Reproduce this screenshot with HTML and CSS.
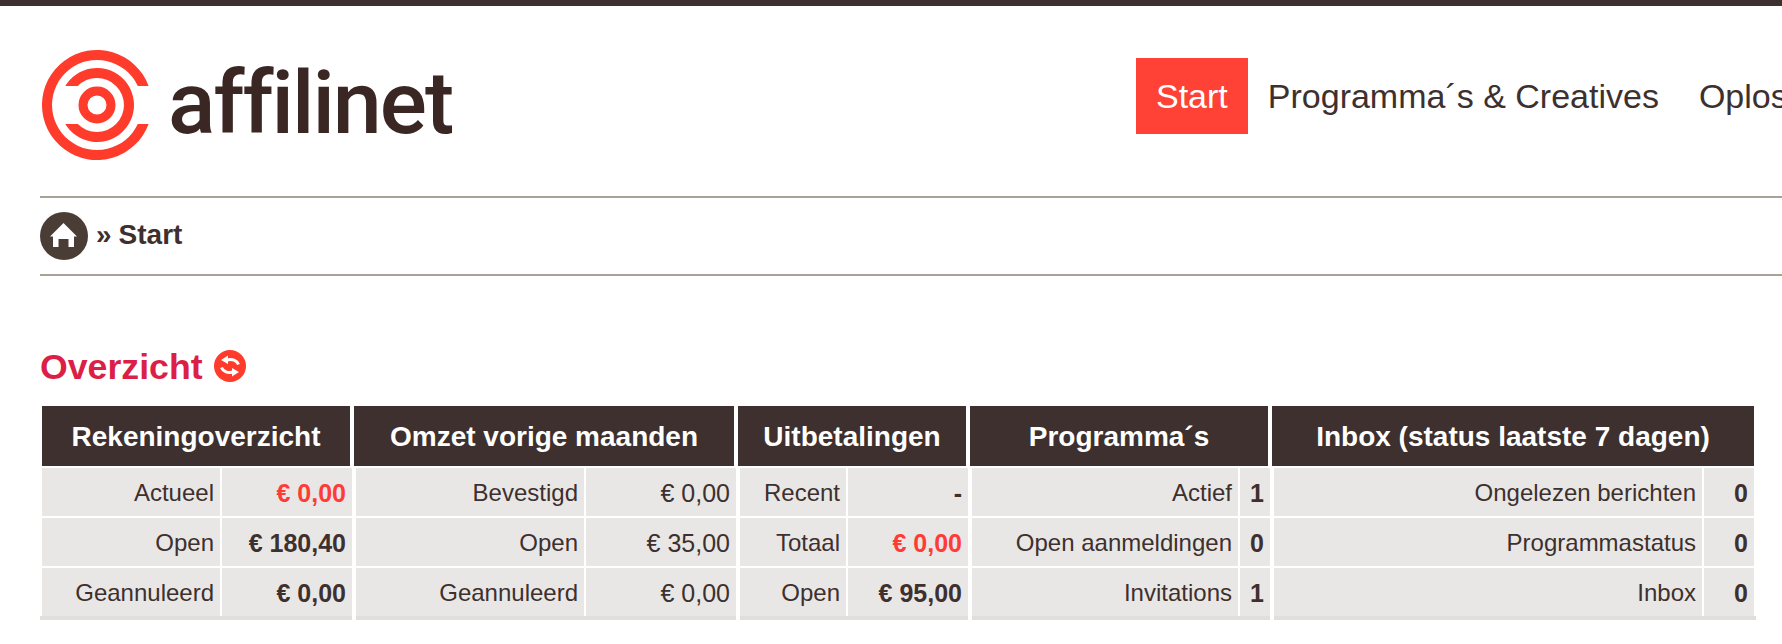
FILE: index.html
```html
<!DOCTYPE html>
<html lang="nl">
<head>
  <meta charset="UTF-8">
  <meta name="viewport" content="width=device-width, initial-scale=1.0">
  <title>affilinet - Start</title>
  <link rel="stylesheet" href="styles.css">
</head>
<body>
  <div class="masthead">
    <a class="brand" href="#">
      <svg class="brand-mark" viewBox="0 0 110 110" width="110" height="110">
        <path d="M106.6 36A55 55 0 1 0 106.6 74L95.8 74A45 45 0 1 1 95.8 36Z"/>
        <path d="M23.25 36A37 37 0 1 1 23.25 74L35.8 74A27 27 0 1 0 35.8 36Z"/>
        <circle class="brand-core" cx="55" cy="55" r="14"/>
      </svg>
      <span class="brand-name">affilinet</span>
    </a>
    <nav class="menu">
      <a class="menu-item active" href="#">Start</a>
      <a class="menu-item" href="#">Programma´s &amp; Creatives</a>
      <a class="menu-item" href="#">Oplossingen</a>
    </nav>
  </div>

  <div class="crumbs">
    <svg class="home" viewBox="0 0 48 48" width="48" height="48">
      <circle cx="24" cy="24" r="24" fill="#4a3d36"/>
      <path d="M23.5 11L37 24.5H34V35H28.5V27H18.5V35H13V24.5H10Z" fill="#fff"/>
    </svg>
    <span class="crumb-sep">»</span>
    <span class="crumb-current">Start</span>
  </div>

  <div class="title">
    <h1>Overzicht</h1>
    <svg class="refresh" viewBox="0 0 32 32" width="32" height="32">
      <circle cx="16" cy="16" r="16" fill="#ff3b2c"/>
      <path d="M24.5 14.5C23 10.5 18 8.5 13 10" fill="none" stroke="#fff" stroke-width="3"/>
      <path d="M7 10L14 5.5V14Z" fill="#fff"/>
      <path d="M7.5 17.5C9 21.5 14 23.5 19 22" fill="none" stroke="#fff" stroke-width="3"/>
      <path d="M25 22L18 26.5V18Z" fill="#fff"/>
    </svg>
  </div>

  <div class="overview">
    <section class="group g1">
      <h2>Rekeningoverzicht</h2>
      <div class="rows">
        <span class="label">Actueel</span><span class="value alert">€ 0,00</span>
        <span class="label">Open</span><span class="value strong">€ 180,40</span>
        <span class="label">Geannuleerd</span><span class="value strong">€ 0,00</span>
      </div>
    </section>
    <section class="group g2">
      <h2>Omzet vorige maanden</h2>
      <div class="rows">
        <span class="label">Bevestigd</span><span class="value">€ 0,00</span>
        <span class="label">Open</span><span class="value">€ 35,00</span>
        <span class="label">Geannuleerd</span><span class="value">€ 0,00</span>
      </div>
    </section>
    <section class="group g3">
      <h2>Uitbetalingen</h2>
      <div class="rows">
        <span class="label">Recent</span><span class="value strong">-</span>
        <span class="label">Totaal</span><span class="value alert">€ 0,00</span>
        <span class="label">Open</span><span class="value strong">€ 95,00</span>
      </div>
    </section>
    <section class="group g4">
      <h2>Programma´s</h2>
      <div class="rows">
        <span class="label">Actief</span><span class="value strong">1</span>
        <span class="label">Open aanmeldingen</span><span class="value strong">0</span>
        <span class="label">Invitations</span><span class="value strong">1</span>
      </div>
    </section>
    <section class="group g5">
      <h2>Inbox (status laatste 7 dagen)</h2>
      <div class="rows">
        <span class="label">Ongelezen berichten</span><span class="value strong">0</span>
        <span class="label">Programmastatus</span><span class="value strong">0</span>
        <span class="label">Inbox</span><span class="value strong">0</span>
      </div>
    </section>
  </div>
</body>
</html>
```

FILE: styles.css
```css
body {
  margin: 0;
  padding: 0 0 0 40px;
  border-top: 6px solid #3d302e;
  background: #fff;
  color: #3d302e;
  font-family: 'Liberation Sans', Arial, sans-serif;
  overflow-x: hidden;
}
a {
  color: inherit;
  text-decoration: none;
}
.masthead {
  display: flex;
  align-items: flex-start;
  height: 190px;
  box-sizing: border-box;
  padding-top: 44px;
}
.brand {
  display: flex;
  align-items: center;
  flex: none;
  width: 1096px;
  padding-left: 2px;
  box-sizing: border-box;
}
.brand-mark {
  flex: none;
  fill: #ff3b2c;
}
.brand-core {
  fill: none;
  stroke: #ff3b2c;
  stroke-width: 9;
}
.brand-name {
  margin-left: 16px;
  margin-top: -4px;
  font-family: Roboto, sans-serif;
  font-size: 88px;
  font-weight: 500;
  font-variant-ligatures: none;
  letter-spacing: -2px;
  line-height: 110px;
  color: #3a2623;
}
.menu {
  display: flex;
  flex: none;
  margin-top: 8px;
  font-size: 34px;
  white-space: nowrap;
}
.menu-item {
  padding: 0 20px;
  line-height: 76px;
}
.menu-item.active {
  background: #ff4136;
  color: #fff;
}
.crumbs {
  display: flex;
  align-items: center;
  height: 76px;
  border-top: 2px solid #a8a297;
  border-bottom: 2px solid #a8a297;
  font-size: 28px;
  font-weight: bold;
}
.crumb-sep {
  margin-left: 8px;
  margin-top: -2px;
}
.crumb-current {
  margin-left: 7px;
  margin-top: -2px;
}
.title {
  display: flex;
  align-items: center;
  height: 32px;
  margin-top: 74px;
}
h1 {
  margin: 2px 0 0;
  font-size: 35.7px;
  color: #dc1f47;
}
.refresh {
  margin-left: 11px;
}
.overview {
  display: flex;
  gap: 4px;
  margin: 24px 0 0 2px;
}
.group {
  flex: none;
}
h2 {
  height: 60px;
  margin: 0 2px 2px -2px;
  background: #3d302e;
  color: #fff;
  font-size: 28px;
  line-height: 61px;
  text-align: center;
  white-space: nowrap;
}
.rows {
  display: grid;
  gap: 2px;
  font-size: 24px;
  text-align: right;
  border-bottom: 4px solid #e0dfdd;
}
.label, .value {
  height: 48px;
  padding-right: 6px;
  background: #e9e7e5;
  line-height: 50px;
  white-space: nowrap;
}
.value {
  font-size: 25px;
}
.strong {
  font-weight: bold;
}
.alert {
  font-weight: bold;
  color: #ff3b36;
}
.g1 { width: 310px; }
.g1 h2 { margin-left: 0; }
.g1 .rows { grid-template-columns: 178px 1fr; margin-left: -2px; padding-left: 2px; }
.g2 { width: 380px; }
.g2 .rows { grid-template-columns: 228px 1fr; }
.g3 { width: 228px; }
.g3 .rows { grid-template-columns: 106px 1fr; }
.g4 { width: 298px; }
.g4 .rows { grid-template-columns: 266px 1fr; }
.g5 { width: 480px; }
.g5 h2 { margin-right: 0; }
.g5 .rows { grid-template-columns: 428px 1fr; margin-right: -2px; padding-right: 2px; }
```
